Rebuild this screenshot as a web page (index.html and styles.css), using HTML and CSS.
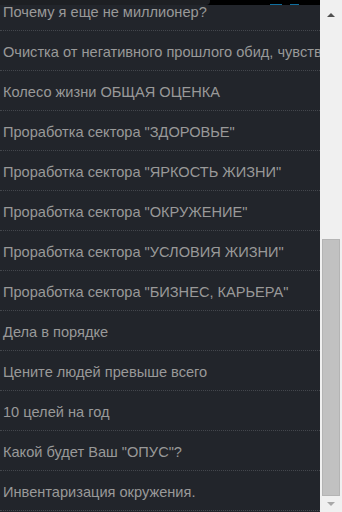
FILE: index.html
```html
<!DOCTYPE html>
<html>
<head>
<meta charset="utf-8">
<link rel="stylesheet" href="styles.css">
</head>
<body>
<div class="app">
  <div class="list">
    <div class="row">Почему я еще не миллионер?</div>
    <div class="row">Очистка от негативного прошлого обид, чувств</div>
    <div class="row">Колесо жизни ОБЩАЯ ОЦЕНКА</div>
    <div class="row">Проработка сектора "ЗДОРОВЬЕ"</div>
    <div class="row">Проработка сектора "ЯРКОСТЬ ЖИЗНИ"</div>
    <div class="row">Проработка сектора "ОКРУЖЕНИЕ"</div>
    <div class="row">Проработка сектора "УСЛОВИЯ ЖИЗНИ"</div>
    <div class="row">Проработка сектора "БИЗНЕС, КАРЬЕРА"</div>
    <div class="row">Дела в порядке</div>
    <div class="row">Цените людей превыше всего</div>
    <div class="row">10 целей на год</div>
    <div class="row">Какой будет Ваш "ОПУС"?</div>
    <div class="row">Инвентаризация окружения.</div>
  </div>
  <div class="scrollbar">
    <div class="arrow up"></div>
    <div class="track">
      <div class="thumb"></div>
    </div>
    <div class="arrow down"></div>
  </div>
  <div class="topbar">
    <div class="tab"></div>
    <div class="icons"><span class="ic ic1"></span><span class="ic ic2"></span></div>
  </div>
</div>
</body>
</html>
```
FILE: styles.css
```css
html, body {
  margin: 0;
  padding: 0;
  background: #22252b;
}
.app {
  position: relative;
  width: 342px;
  height: 512px;
  overflow: hidden;
  display: flex;
}
.list {
  width: 320px;
  margin-top: -9px;
  flex: none;
}
.row {
  box-sizing: content-box;
  height: 37px;
  line-height: 39px;
  padding-left: 3px;
  padding-top: 2px;
  border-bottom: 1px dotted #44474d;
  font-family: "Liberation Sans", Arial, sans-serif;
  font-size: 14.6px;
  color: #999999;
  white-space: nowrap;
  overflow: hidden;
}
.scrollbar {
  flex: 1;
  background: #f0f0f0;
  display: flex;
  flex-direction: column;
  align-items: center;
  padding-top: 13px;
}
.arrow {
  width: 0;
  height: 0;
  border-left: 4px solid transparent;
  border-right: 4px solid transparent;
}
.arrow.up {
  border-bottom: 4px solid #505050;
}
.track {
  flex: 1;
  width: 100%;
  display: flex;
  flex-direction: column;
  justify-content: flex-end;
  padding: 0 2px 6px 2px;
  box-sizing: border-box;
}
.thumb {
  height: 257px;
  background: #c1c1c1;
  border: 1px solid #b4b4b4;
  box-sizing: border-box;
}
.arrow.down {
  border-top: 4px solid #a8a8a8;
  margin-bottom: 6px;
}
.topbar {
  position: absolute;
  left: 0;
  top: 0;
  width: 320px;
  height: 5px;
  background: #000;
  display: flex;
}
.tab {
  width: 210px;
  height: 5px;
  background: #1d1f23;
  border-bottom-right-radius: 4px;
}
.icons {
  display: flex;
  gap: 8px;
  margin-left: 60px;
  align-items: flex-end;
}
.ic {
  display: block;
  height: 1px;
  background: #0f6e9e;
}
.ic1 { width: 12px; }
.ic2 { width: 9px; }
```
